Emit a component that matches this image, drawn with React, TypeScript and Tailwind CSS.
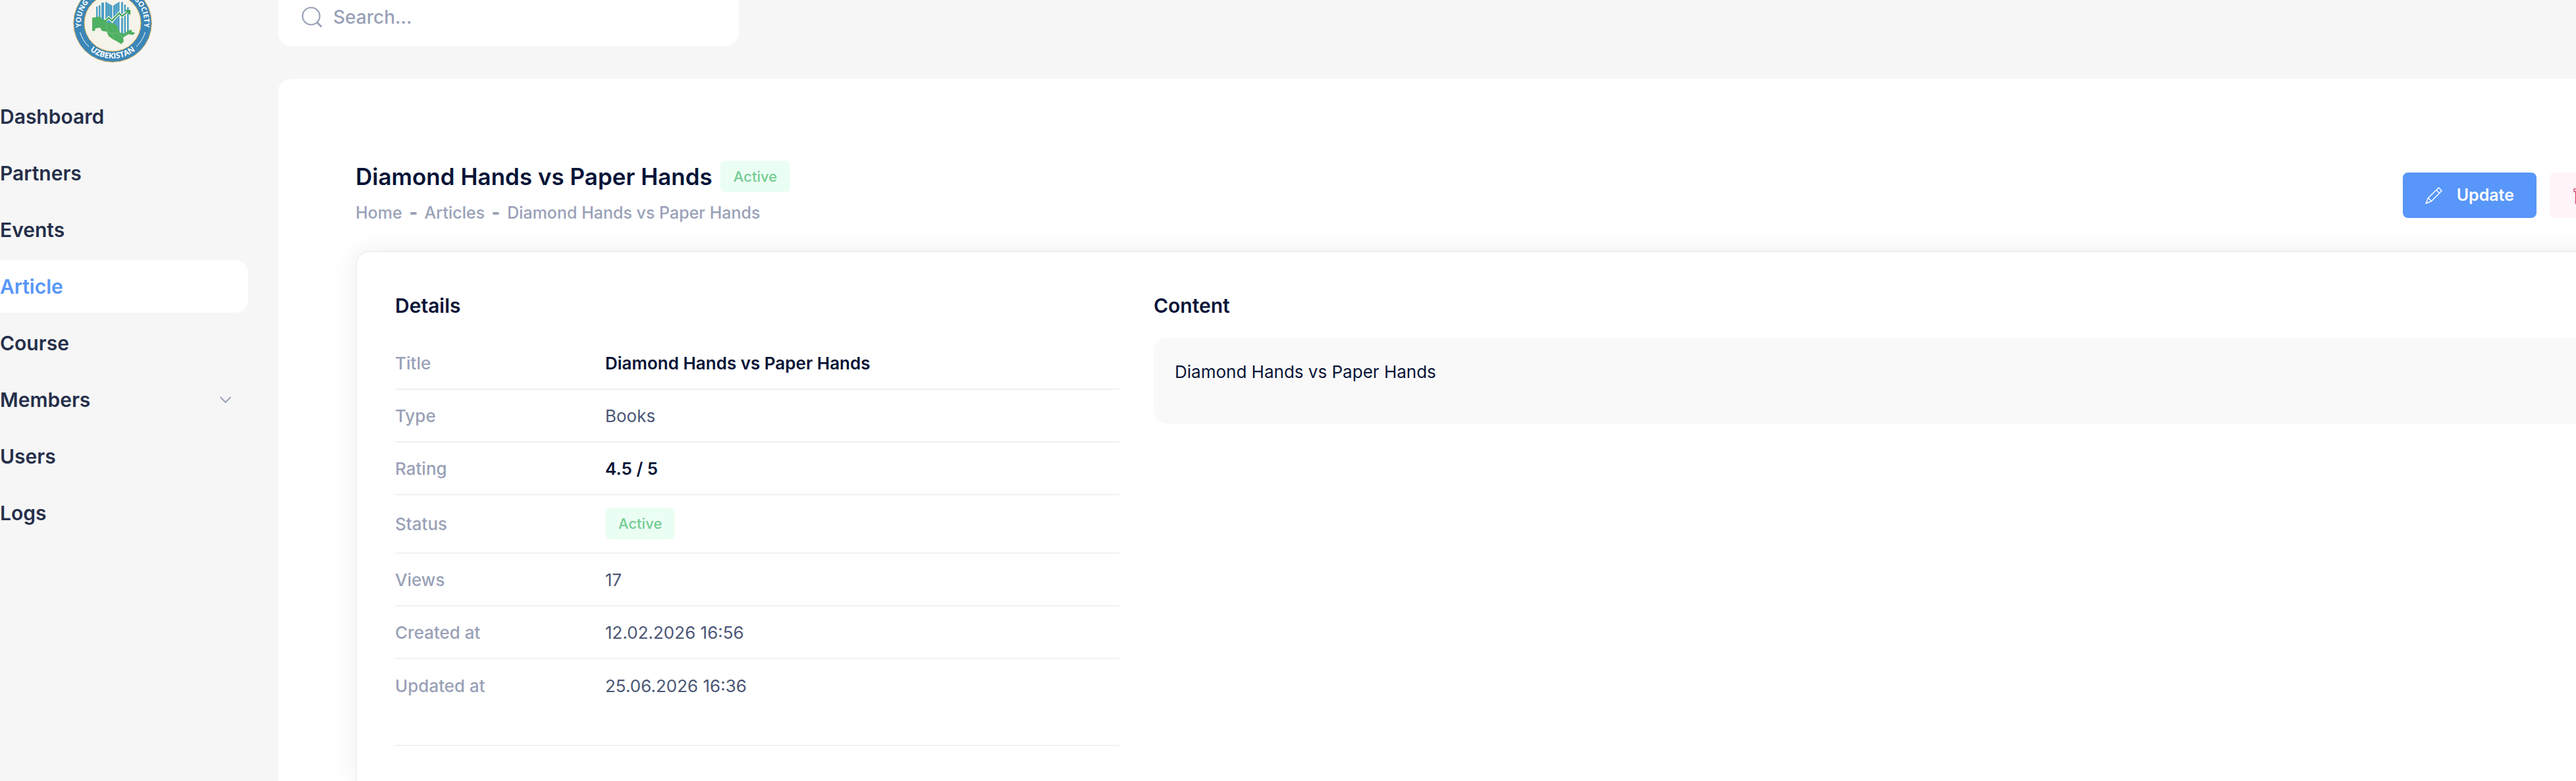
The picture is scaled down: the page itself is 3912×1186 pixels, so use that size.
const nav = ["Dashboard", "Partners", "Events", "Article", "Course", "Members", "Users", "Logs"];

function Logo() {
  return (
    <svg viewBox="0 0 120 120" className="size-[120px]" role="img" aria-label="Society of Uzbekistan logo">
      <defs>
        <path id="arc-top" d="M 15.400 78 A 48.100 48.100 0 1 1 104.600 78" />
        <path id="arc-bottom" d="M 6 60 A 54 54 0 0 0 114 60" />
      </defs>
      <circle cx="60" cy="60" r="59.300" fill="#3b86b8" stroke="#e0b45a" strokeWidth="1" />
      <circle cx="60" cy="60" r="43" fill="#f6f3ea" stroke="#e3b552" strokeWidth="1" />
      <g fill="#4a9fc4">
        <path d="M49 27.500 59.500 33.500V62H49ZM61 33.500 70.500 27.500V74H61Z" />
        <path d="M35 35h2.500v17H35ZM39 33h2.500v19H39ZM43 29h4v26H43ZM73 28h2.800v50H73ZM77.500 32h2.500V77h-2.500ZM82 36h2.500V74H82Z" />
      </g>
      <path d="M52 30V56M55.500 32V56M64.500 32V68M67.500 30V72" stroke="#8cc3dc" strokeWidth="0.500" />
      <path d="M48 58 54 52 59 56.500 70 45 74.500 49.500 84 42" fill="none" stroke="#f6f3ea" strokeWidth="4.500" />
      <path d="M48 58 54 52 59 56.500 70 45 74.500 49.500 84 42" fill="none" stroke="#3fa35b" strokeWidth="2.200" />
      <path d="M79 40h8v8l-3-2.500-3-3Z" fill="#3fa35b" />
      <path
        d="M29 52 35 51 41 50 44 54 51 56 52 60 61 60 67 64 69 70 72 75 79 76 82 72 89 70 89 73 94 75 91 78 84 77 79 80 76 82 77 88 73 92 67 88 61 85 54 80 51 73 44 72 41 67 34 68 33 72 29 72Z"
        fill="#4fb062"
      />
      <path d="M52 60 50 65 54 74 60 76 69 74M60 76 62 84M69 74 72 80 76 82" fill="none" stroke="#7cc588" strokeWidth="0.600" />
      <path d="M10.500 74A51.500 51.500 0 0 0 24 96M109.500 74A51.500 51.500 0 0 1 96 96" fill="none" stroke="#fff" strokeWidth="1" />
      <g fill="#fff" fontFamily="Open Sans, sans-serif" fontSize="11" fontWeight="700" textAnchor="middle">
        <text>
          <textPath href="#arc-top" startOffset="50%">
            YOUNG ECONOMISTS SOCIETY
          </textPath>
        </text>
        <text fontSize="12">
          <textPath href="#arc-bottom" startOffset="50%">
            UZBEKISTAN
          </textPath>
        </text>
      </g>
    </svg>
  );
}

function SearchIcon() {
  return (
    <svg viewBox="0 0 32 32" className="size-8 shrink-0" fill="none" stroke="#99a1b7" strokeLinecap="round">
      <circle cx="14.500" cy="14.500" r="13" strokeWidth="2.200" />
      <path d="m24.500 25 5 5" strokeWidth="2.800" />
    </svg>
  );
}

function ChevronIcon() {
  return (
    <svg viewBox="0 0 17 11" className="h-[11px] w-[17px]" fill="none" stroke="#99a1b7" strokeWidth="2" strokeLinecap="round" strokeLinejoin="round">
      <path d="M1.200 1.500 8.500 9 15.800 1.500" />
    </svg>
  );
}

function PencilIcon() {
  return (
    <svg viewBox="0 0 26 26" className="size-[26px]" fill="none" stroke="#fff" strokeWidth="1.500" strokeLinejoin="round">
      <path d="M20.500 1 25 5.800 9.500 21.500 1 25 4.500 16.500ZM17 4.500 21.500 9.300M4.500 16.500 9.500 21.500" />
    </svg>
  );
}

function TrashIcon() {
  return (
    <svg viewBox="0 0 26 26" className="size-[26px]" fill="none" stroke="#e0486d" strokeWidth="1.500" strokeLinejoin="round">
      <path d="M1 3h24v4H1ZM3.500 7v18h19V7M9 3V1h8v2M9.500 10.500v10.500M16.500 10.500v10.500" />
    </svg>
  );
}

function Badge() {
  return (
    <span className="inline-flex h-12 items-center rounded-lg bg-[#ebfef4] px-5 text-[22px] font-medium text-[#74cc92]">
      Active
    </span>
  );
}

const strong = "font-semibold text-[#071437]";
const plain = "text-[#4b5675]";

const rows = [
  { label: "Title", value: "Diamond Hands vs Paper Hands", style: strong },
  { label: "Type", value: "Books", style: plain },
  { label: "Rating", value: "4.5 / 5", style: strong },
  { label: "Status", value: null, style: "" },
  { label: "Views", value: "17", style: plain },
  { label: "Created at", value: "12.02.2026 16:56", style: plain },
  { label: "Updated at", value: "25.06.2026 16:36", style: plain },
];

export default function App() {
  return (
    <div className="flex h-screen overflow-hidden bg-[#f6f6f6] font-['Inter',sans-serif] text-[#071437]">
      <aside className="w-[422px] shrink-0">
        <div className="-mt-[25px] ml-[111px] h-[162px]">
          <Logo />
        </div>
        <nav className="flex w-[377px] flex-col gap-[6px]">
          {nav.map((item) => (
            <a
              key={item}
              href="#"
              className={
                item === "Article"
                  ? "flex h-20 items-center justify-between rounded-r-[20px] bg-white pr-6 text-[30px] font-semibold text-[#5896f9]"
                  : "flex h-20 items-center justify-between pr-[26px] text-[30px] font-semibold text-[#252f4a]"
              }
            >
              {item}
              {item === "Members" && <ChevronIcon />}
            </a>
          ))}
        </nav>
      </aside>

      <div className="flex min-w-0 flex-1 flex-col">
        <label className="-mt-[18px] flex h-[88px] w-[700px] shrink-0 items-center gap-4 rounded-[20px] bg-white px-9">
          <SearchIcon />
          <input
            type="text"
            aria-label="Search"
            placeholder="Search..."
            className="min-w-0 flex-1 bg-transparent text-[28px] font-medium outline-none placeholder:text-[#99a1b7]"
          />
        </label>

        <main className="-mr-[200px] mt-[50px] flex flex-1 flex-col rounded-tl-[20px] bg-white pl-[118px] pt-[124px]">
          <div className="flex h-[105px] items-center justify-between">
            <div className="self-start">
              <div className="flex h-12 items-center gap-3">
                <h1 className="text-[35px] font-semibold">Diamond Hands vs Paper Hands</h1>
                <Badge />
              </div>
              <nav aria-label="Breadcrumb" className="mt-3 flex h-10 items-center gap-3 text-[25px] font-medium text-[#99a1b7]">
                <a href="#">Home</a>
                <span className="h-1 w-2.5 rounded-sm bg-[#99a1b7]" />
                <a href="#">Articles</a>
                <span className="h-1 w-2.5 rounded-sm bg-[#99a1b7]" />
                <span>Diamond Hands vs Paper Hands</span>
              </nav>
            </div>
            <div className="flex gap-5 pr-12">
              <button className="flex h-[69px] items-center gap-[22px] rounded-lg bg-[#5896f9] px-[34px] text-[25px] font-semibold text-white">
                <PencilIcon />
                Update
              </button>
              <button aria-label="Delete" className="flex h-[69px] w-48 items-center rounded-lg bg-[#fff4f8] px-9">
                <TrashIcon />
              </button>
            </div>
          </div>

          <section className="mt-8 flex flex-1 gap-[52px] rounded-tl-[20px] border-2 border-b-0 border-r-0 border-[#f1f1f1] bg-white pl-[58px] pt-[57px] shadow-[0_0_40px_rgba(0,0,0,0.07)]">
            <div className="w-[1100px] shrink-0">
              <h2 className="flex h-12 items-center text-[30px] font-semibold">Details</h2>
              <table className="mt-6 w-full table-fixed border-separate border-spacing-0 text-left text-[26px]">
                <tbody>
                  {rows.map(({ label, value, style }) => (
                    <tr key={label} className="group">
                      <th
                        scope="row"
                        className="h-20 w-[319px] border-b-2 border-[#f1f1f1] p-0 font-medium text-[#99a1b7] group-last:border-b-0"
                      >
                        {label}
                      </th>
                      {value === null ? (
                        <td className="border-b-2 border-[#f1f1f1] pb-5 pt-[19px]">
                          <div className="flex">
                            <Badge />
                          </div>
                        </td>
                      ) : (
                        <td className="border-b-2 border-[#f1f1f1] p-0 group-last:border-b-0">
                          <span className={style}>{value}</span>
                        </td>
                      )}
                    </tr>
                  ))}
                </tbody>
              </table>
              <hr className="mt-[50px] border-t-2 border-[#f1f1f1]" />
            </div>
            <div className="min-w-0 flex-1">
              <h2 className="flex h-12 items-center text-[30px] font-semibold">Content</h2>
              <div className="mt-[25px] h-[130px] rounded-l-[20px] bg-[#f9f9f9] px-8 pt-8 text-[26px] leading-10">
                <p>Diamond Hands vs Paper Hands</p>
              </div>
            </div>
          </section>
        </main>
      </div>
    </div>
  );
}
